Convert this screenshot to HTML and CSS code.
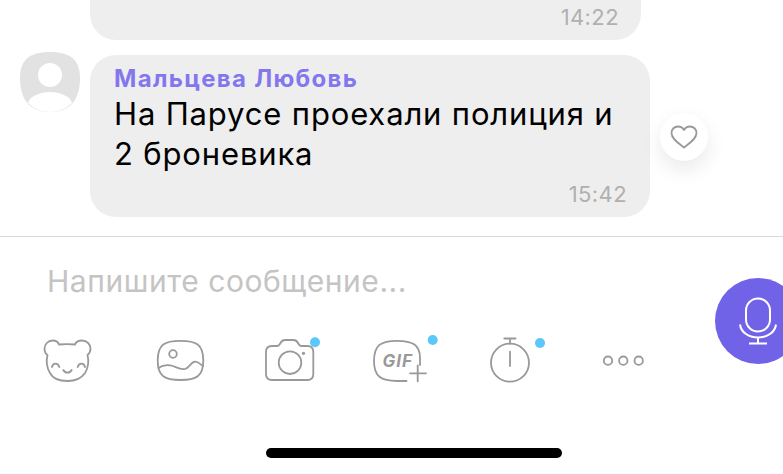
FILE: index.html
```html
<!DOCTYPE html>
<html lang="ru">
<head>
<meta charset="UTF-8">
<meta name="viewport" content="width=device-width, initial-scale=1.0">
<title>Чат</title>
<link rel="stylesheet" href="styles.css">
</head>
<body>
<div class="screen">
    <div class="messages">
        <div class="bubble bubble-cut">
            <div class="time">14:22</div>
        </div>
        <div class="message-row">
            <svg class="avatar" viewBox="0 0 60 60">
                <path fill="#e2e2e2" d="M30 0C48 0 60 6 60 26C60 48 50 60 30 60C10 60 0 48 0 26C0 6 12 0 30 0Z"/>
                <circle fill="#fff" cx="30" cy="23" r="12"/>
                <path fill="#fff" d="M8 51C10 44 20 40 30 40C40 40 50 44 52 51C46 57 38 60 30 60C22 60 14 57 8 51Z"/>
            </svg>
            <div class="bubble bubble-full">
                <div class="name">Мальцева Любовь</div>
                <div class="text">На Парусе проехали полиция и<br>2 броневика</div>
                <div class="time">15:42</div>
            </div>
            <button class="like">
                <svg width="28" height="24" viewBox="0 0 28 24">
                    <path class="line" d="M14 22.5C9 18.5 1.5 14 1.5 8C1.5 4 4.5 1.5 8 1.5C10.5 1.5 12.8 2.8 14 5C15.2 2.8 17.5 1.5 20 1.5C23.5 1.5 26.5 4 26.5 8C26.5 14 19 18.5 14 22.5Z"/>
                </svg>
            </button>
        </div>
    </div>

    <div class="composer">
        <div class="placeholder">Напишите сообщение...</div>
        <div class="toolbar">
            <svg class="tool" viewBox="33 335 70 50">
                <path class="line" d="M59 344.5C62 344 72 344 75 344.5C76 341.5 79 340.5 82 340.5C87 340.5 90.5 344.5 90.5 348.5C90.5 352 88.8 354 87.5 355C89 361 88 368 85 373C81 379 74 381 67.5 381C60 381 53 379 50 373C47 368 46 361 47.5 355C46 354 44.5 352 44.5 348.5C44.5 344.5 48 340.5 52.5 340.5C55 340.5 58 341.5 59 344.5Z"/>
                <path class="line" d="M52 367C53 362.5 58 362.5 59.3 367M77.7 367C79 362.5 84 362.5 85 367M63.3 370C65 373.5 70 373.5 71.7 370"/>
            </svg>
            <svg class="tool" viewBox="144 335 70 50">
                <path class="line" d="M180.5 340.8C196 340.8 203.3 344 203.3 360.5C203.3 376.5 196 380 180.5 380C165 380 157.7 376.5 157.7 360.5C157.7 344 165 340.8 180.5 340.8Z"/>
                <circle class="line" cx="173" cy="354" r="3.8"/>
                <path class="line" d="M158.3 368C162 365.5 168 364.5 173 366C177 367.5 181 370 185 369C189 368 191 362 195 361.7C198 361.5 200 364 203 366"/>
            </svg>
            <svg class="tool" viewBox="255 335 70 50">
                <path class="line" d="M272 346H277C279 346 279.5 345 280.5 343C281.5 341 282.5 340 285 340H293.5C296 340 297 341 298 343C299 345 299.5 346 301.5 346H307.5C311.5 346 313.3 348 313.3 352V374C313.3 378 311.5 380 307.5 380H272C268 380 266 378 266 374V352C266 348 268 346 272 346Z"/>
                <circle class="line" cx="290" cy="362.7" r="11.3"/>
                <circle class="fill" cx="303.5" cy="353.3" r="1.6"/>
                <circle class="badge" cx="315" cy="342.3" r="5"/>
            </svg>
            <svg class="tool" viewBox="366 335 70 50">
                <path class="line" d="M420 365V358C420 345 413 340.8 397 340.8C381 340.8 374 345 374 361C374 376.5 381 381 397 381H406.5"/>
                <text class="gif" x="382.5" y="366.5">GIF</text>
                <path class="line" d="M410 373.3H426M417.7 365.3V381.3"/>
                <circle class="badge" cx="432.7" cy="340" r="5"/>
            </svg>
            <svg class="tool" viewBox="477 335 70 50">
                <circle class="line" cx="510" cy="362.7" r="19"/>
                <path class="line" d="M504.3 338.5H515.5M510 338.5V343.5M510 351.7V366"/>
                <circle class="badge" cx="540" cy="343" r="5"/>
            </svg>
            <svg class="tool" viewBox="588 335 70 50">
                <circle class="line" cx="608" cy="360.7" r="4.2"/>
                <circle class="line" cx="623.3" cy="360.7" r="4.2"/>
                <circle class="line" cx="638.7" cy="360.7" r="4.2"/>
            </svg>
        </div>
        <div class="home-bar"></div>
    </div>

    <button class="mic">
        <svg width="40" height="52" viewBox="0 0 40 52">
            <rect class="mic-line" x="8" y="3.5" width="24" height="33" rx="12"/>
            <path class="mic-line" d="M2 29.5C3 37 10 42.5 20 42.5C30 42.5 37 37 38 29.5M20 42.5V48M11 48.5H29"/>
        </svg>
    </button>
</div>
</body>
</html>
```

FILE: styles.css
```css
* {
    box-sizing: border-box;
}
body {
    margin: 0;
    background-color: #fff;
    font-family: Inter, "Noto Sans", sans-serif;
}
.screen {
    position: relative;
    width: 783px;
    height: 474px;
    overflow: hidden;
}
.messages {
    height: 236px;
}
.bubble {
    background-color: #eee;
}
.bubble-cut {
    width: 551px;
    height: 40px;
    margin-left: 90px;
    padding: 5px 22px 0 0;
    border-radius: 0 0 26px 26px;
}
.message-row {
    position: relative;
    display: flex;
    align-items: flex-start;
    gap: 10px;
    margin-top: 12px;
    padding-left: 20px;
}
.avatar {
    width: 60px;
    height: 60px;
    flex: none;
}
.bubble-full {
    width: 560px;
    height: 162px;
    margin-top: 3px;
    padding: 10px 23px 0 24px;
    border-radius: 26px;
}
.name {
    font-size: 24px;
    font-weight: 700;
    line-height: 28px;
    letter-spacing: 1.3px;
    color: #8477ee;
}
.text {
    margin-top: 1px;
    font-size: 31px;
    line-height: 40px;
    letter-spacing: 0.85px;
    color: #000;
    white-space: nowrap;
}
.time {
    font-size: 22px;
    line-height: 24px;
    letter-spacing: 0.4px;
    text-align: right;
    color: #b0b0b0;
}
.bubble-full .time {
    margin-top: 8px;
}
.like {
    position: absolute;
    left: 660px;
    top: 61px;
    display: flex;
    align-items: center;
    justify-content: center;
    width: 48px;
    height: 48px;
    padding: 0;
    border: 0;
    border-radius: 50%;
    background-color: #fff;
    box-shadow: 0 8px 20px rgba(0, 0, 0, 0.09);
}
.composer {
    height: 238px;
    border-top: 1px solid #d9d9d9;
}
.placeholder {
    height: 98px;
    padding: 27px 0 0 47px;
    font-size: 30px;
    line-height: 34px;
    letter-spacing: 0.55px;
    color: #c4c4c4;
}
.toolbar {
    display: flex;
    gap: 41px;
    padding-left: 33px;
}
.tool {
    width: 70px;
    height: 50px;
    flex: none;
    overflow: visible;
}
.line {
    fill: none;
    stroke: #999;
    stroke-width: 1.8;
    stroke-linecap: round;
    stroke-linejoin: round;
}
.fill {
    fill: #999;
}
.badge {
    fill: #5ac8fa;
}
.gif {
    font-size: 17px;
    font-weight: 700;
    font-style: italic;
    letter-spacing: 1px;
    fill: #999;
}
.home-bar {
    width: 296px;
    height: 10px;
    margin: 63px 0 0 266px;
    border-radius: 5px;
    background-color: #000;
}
.mic {
    position: absolute;
    left: 715px;
    top: 278px;
    display: flex;
    align-items: center;
    justify-content: center;
    width: 86px;
    height: 86px;
    padding: 0;
    border: 0;
    border-radius: 50%;
    background-color: #7063e8;
}
.mic-line {
    fill: none;
    stroke: #fff;
    stroke-width: 2;
}
```
